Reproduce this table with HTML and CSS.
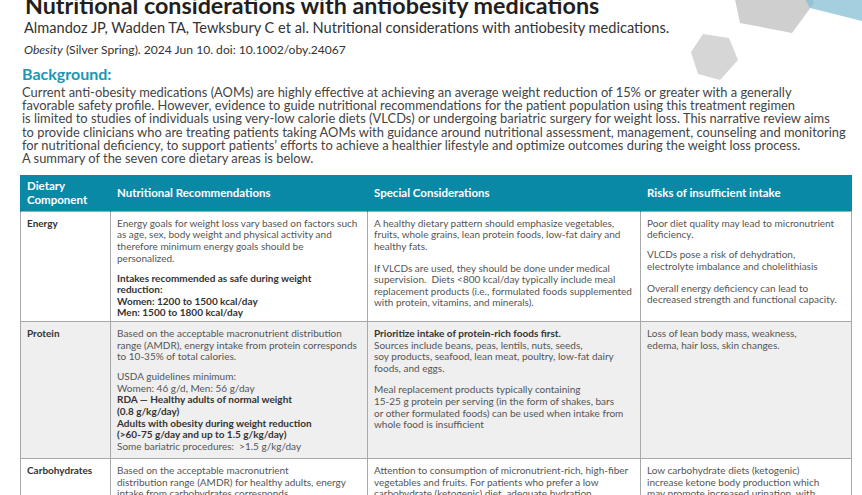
FILE: index.html
```html
<!DOCTYPE html>
<html>
<head>
<meta charset="utf-8">
<link rel="stylesheet" href="styles.css">
</head>
<body>
<div class="page">
  <svg class="deco" width="862" height="100" viewBox="0 0 862 100">
    <polygon points="733,-10 740,23 792,33 814,3 805,-20 750,-25" fill="#cfcfcf"/>
    <polygon points="703,34 729,38 738,60 720,80 698,74 691,52" fill="#d6d6d6"/>
    <polygon points="800,-10 810,8 862,21 870,-10" fill="#7fbcd3" fill-opacity="0.72"/>
  </svg>
  <h1 class="title">Nutritional considerations with antiobesity medications</h1>
  <p class="cite1">Almandoz JP, Wadden TA, Tewksbury C et al. Nutritional considerations with antiobesity medications.</p>
  <p class="cite2"><i>Obesity</i> (Silver Spring). 2024 Jun 10. doi: 10.1002/oby.24067</p>
  <h2 class="bg-head">Background:</h2>
  <p class="intro">Current anti-obesity medications (AOMs) are highly effective at achieving an average weight reduction of 15% or greater with a generally<br>favorable safety profile. However, evidence to guide nutritional recommendations for the patient population using this treatment regimen<br>is limited to studies of individuals using very-low calorie diets (VLCDs) or undergoing bariatric surgery for weight loss. This narrative review aims<br>to provide clinicians who are treating patients taking AOMs with guidance around nutritional assessment, management, counseling and monitoring<br>for nutritional deficiency, to support patients’ efforts to achieve a healthier lifestyle and optimize outcomes during the weight loss process.<br>A summary of the seven core dietary areas is below.</p>

  <table class="diet">
    <colgroup>
      <col class="c1"><col class="c2"><col class="c3"><col class="c4">
    </colgroup>
    <thead>
      <tr class="head-row">
        <th>Dietary<br>Component</th>
        <th>Nutritional Recommendations</th>
        <th>Special Considerations</th>
        <th>Risks of insufficient intake</th>
      </tr>
    </thead>
    <tbody>
      <tr class="row-energy">
        <td class="comp">Energy</td>
        <td>
          <p>Energy goals for weight loss vary based on factors such<br>as age, sex, body weight and physical activity and<br>therefore minimum energy goals should be<br>personalized.</p>
          <p class="gap b">Intakes recommended as safe during weight<br>reduction:<br>Women: 1200 to 1500 kcal/day<br>Men: 1500 to 1800 kcal/day</p>
        </td>
        <td>
          <p>A healthy dietary pattern should emphasize vegetables,<br>fruits, whole grains, lean protein foods, low-fat dairy and<br>healthy fats.</p>
          <p class="gap2">If VLCDs are used, they should be done under medical<br>supervision.&nbsp; Diets &lt;800 kcal/day typically include meal<br>replacement products (i.e., formulated foods supplemented<br>with protein, vitamins, and minerals).</p>
        </td>
        <td>
          <p>Poor diet quality may lead to micronutrient<br>deficiency.</p>
          <p class="gap">VLCDs pose a risk of dehydration,<br>electrolyte imbalance and cholelithiasis</p>
          <p class="gap2">Overall energy deficiency can lead to<br>decreased strength and functional capacity.</p>
        </td>
      </tr>
      <tr class="row-protein">
        <td class="comp">Protein</td>
        <td>
          <p>Based on the acceptable macronutrient distribution<br>range (AMDR), energy intake from protein corresponds<br>to 10-35% of total calories.</p>
          <p class="gap">USDA guidelines minimum:<br>Women: 46 g/d, Men: 56 g/day<br><b>RDA — Healthy adults of normal weight<br>(0.8 g/kg/day)<br>Adults with obesity during weight reduction<br>(&gt;60-75 g/day and up to 1.5 g/kg/day)</b><br>Some bariatric procedures:&nbsp; &gt;1.5 g/kg/day</p>
        </td>
        <td>
          <p><b>Prioritize intake of protein-rich foods first.</b><br>Sources include beans, peas, lentils, nuts, seeds,<br>soy products, seafood, lean meat, poultry, low-fat dairy<br>foods, and eggs.</p>
          <p class="gap2">Meal replacement products typically containing<br>15-25 g protein per serving (in the form of shakes, bars<br>or other formulated foods) can be used when intake from<br>whole food is insufficient</p>
        </td>
        <td>
          <p>Loss of lean body mass, weakness,<br>edema, hair loss, skin changes.</p>
        </td>
      </tr>
      <tr class="row-carb">
        <td class="comp">Carbohydrates</td>
        <td>
          <p>Based on the acceptable macronutrient<br>distribution range (AMDR) for healthy adults, energy<br>intake from carbohydrates corresponds</p>
        </td>
        <td>
          <p>Attention to consumption of micronutrient-rich, high-fiber<br>vegetables and fruits. For patients who prefer a low<br>carbohydrate (ketogenic) diet, adequate hydration</p>
        </td>
        <td>
          <p>Low carbohydrate diets (ketogenic)<br>increase ketone body production which<br>may promote increased urination, with</p>
        </td>
      </tr>
    </tbody>
  </table>
</div>
</body>
</html>
```
FILE: styles.css
```css
html, body {
  margin: 0;
  padding: 0;
  background: #ffffff;
  overflow: hidden;
}
body {
  font-family: Lato, "Open Sans", sans-serif;
  width: 862px;
  height: 495px;
}
.page {
  position: relative;
  width: 862px;
  height: 495px;
  overflow: hidden;
}
.deco {
  position: absolute;
  left: 0;
  top: 0;
}
.title {
  position: relative;
  margin: -9px 0 0 25px;
  font-size: 23.3px;
  line-height: 28px;
  font-weight: 700;
  color: #231f20;
}
.cite1 {
  position: relative;
  margin: 0 0 0 24px;
  font-size: 14.6px;
  line-height: 18px;
  color: #333;
}
.cite2 {
  position: relative;
  margin: 5px 0 0 24px;
  font-size: 12.1px;
  line-height: 15px;
  color: #333;
}
.bg-head {
  margin: 7px 0 0 22px;
  font-size: 16px;
  line-height: 19px;
  font-weight: 700;
  color: #1a97b4;
}
.intro {
  margin: 3px 0 0 22px;
  font-size: 12.9px;
  line-height: 13.2px;
  color: #444;
  white-space: nowrap;
}
.diet {
  margin: 10px 0 0 20px;
  width: 831px;
  border-collapse: collapse;
  table-layout: fixed;
}
.c1 { width: 90px; }
.c2 { width: 257px; }
.c3 { width: 273px; }
.c4 { width: 211px; }
.head-row {
  height: 36px;
  background: #0a89a6;
}
.head-row th {
  text-align: left;
  vertical-align: middle;
  padding: 0 6px;
  color: #fff;
  font-size: 11.5px;
  line-height: 14px;
  font-weight: 700;
  border-left: 1px solid #0a89a6;
}
.diet td {
  vertical-align: top;
  padding: 6px 6px 2px 6px;
  font-size: 10px;
  line-height: 11.6px;
  color: #555;
  border: 1px solid #a8a8a8;
  white-space: nowrap;
}
.diet td p {
  margin: 0;
}
.diet td b, .diet td .b {
  color: #333;
  font-weight: 700;
}
.diet td.comp {
  color: #333;
  font-weight: 700;
  font-size: 10px;
}
.gap { margin-top: 8.5px !important; }
.gap2 { margin-top: 10px !important; }
.row-energy { height: 108px; }
.row-protein { height: 137px; background: #efefef; }
.row-carb { height: 60px; }
```
